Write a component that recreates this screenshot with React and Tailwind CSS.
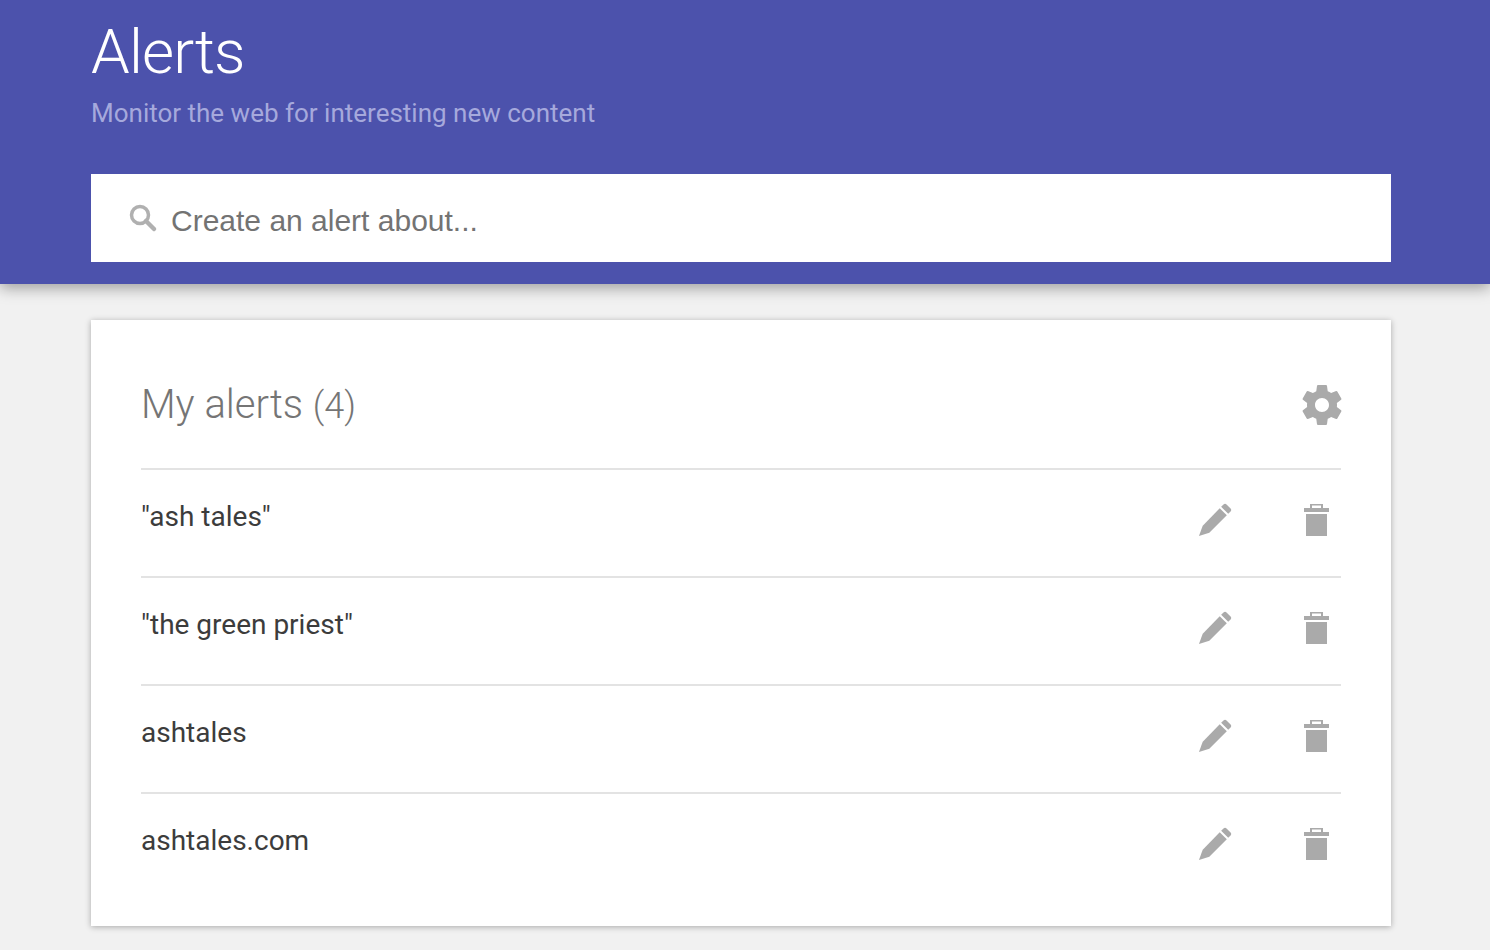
import React from 'react';

const alerts = ['"ash tales"', '"the green priest"', 'ashtales', 'ashtales.com'];

const PencilIcon = () => (
  <svg width="34" height="34" viewBox="0 0 36 36" fill="#aaaaaa">
    <path d="M1 35 L5 24 L23 5.5 L30.5 13 L12 31.5 Z" />
    <path d="M24.5 4 L27 1.5 C28 .6 29.3 .6 30.2 1.5 L34.5 5.8 C35.4 6.7 35.4 8 34.5 9 L32 11.5 Z" />
  </svg>
);

const TrashIcon = () => (
  <svg width="25" height="34" viewBox="0 0 25 34" fill="#aaaaaa">
    <path d="M0 5 H6 V1 H19 V5 H25 V9 H0 Z M8 2.5 V5 H17 V2.5 Z" fillRule="evenodd" />
    <rect x="2" y="11" width="21" height="22" />
  </svg>
);

const GearIcon = () => (
  <svg width="48" height="48" viewBox="0 0 24 24" fill="#aaaaaa">
    <path d="M19.43 12.98c.04-.32.07-.64.07-.98s-.03-.66-.07-.98l2.11-1.65c.19-.15.24-.42.12-.64l-2-3.46c-.12-.22-.39-.3-.61-.22l-2.49 1c-.52-.4-1.08-.73-1.69-.98l-.38-2.65C14.46 2.18 14.25 2 14 2h-4c-.25 0-.46.18-.49.42l-.38 2.65c-.61.25-1.17.59-1.69.98l-2.49-1c-.23-.09-.49 0-.61.22l-2 3.46c-.13.22-.07.49.12.64l2.11 1.65c-.04.32-.07.65-.07.98s.03.66.07.98l-2.11 1.65c-.19.15-.24.42-.12.64l2 3.46c.12.22.39.3.61.22l2.49-1c.52.4 1.08.73 1.69.98l.38 2.65c.03.24.24.42.49.42h4c.25 0 .46-.18.49-.42l.38-2.65c.61-.25 1.17-.59 1.69-.98l2.49 1c.23.09.49 0 .61-.22l2-3.46c.12-.22.07-.49-.12-.64l-2.11-1.65zM12 15.5c-1.93 0-3.5-1.57-3.5-3.5s1.57-3.5 3.5-3.5 3.5 1.57 3.5 3.5-1.57 3.5-3.5 3.5z" />
  </svg>
);

const SearchIcon = () => (
  <svg width="30" height="30" viewBox="0 0 30 30" fill="none" stroke="#b0b0b0">
    <circle cx="12" cy="12" r="8.5" strokeWidth="3.5" />
    <path d="M18 18 L26 26" strokeWidth="4.5" strokeLinecap="round" />
  </svg>
);

export default function App() {
  return (
    <div className="min-h-[950px] bg-[#f1f1f1] font-['Roboto',sans-serif] overflow-hidden">
      <header className="relative h-[284px] bg-[#4c52ac] pl-[91px] pr-[99px] shadow-[0_4px_14px_rgba(0,0,0,0.35)]">
        <h1 className="pt-[16px] text-[62px] leading-[72px] font-light text-white tracking-[-0.8px]">Alerts</h1>
        <p className="mt-[7px] text-[26px] leading-[36px] text-[#a6a9dc]">Monitor the web for interesting new content</p>
        <div className="mt-[43px] flex h-[88px] items-center bg-white pl-[37px]">
          <SearchIcon />
          <span className="ml-[13px] pt-[5px] font-['Liberation_Sans',sans-serif] text-[30px] text-[#737373]">Create an alert about...</span>
        </div>
      </header>

      <main className="ml-[91px] mr-[99px] mt-[36px] h-[606px] bg-white px-[50px] shadow-[0_1px_6px_rgba(0,0,0,0.3)]">
        <div className="flex h-[150px] items-center justify-between border-b-2 border-[#e3e3e3] pt-[23px] pb-[2px]">
          <h2 className="text-[40px] font-light text-[#757575]">
            My alerts <span className="text-[36px]">(4)</span>
          </h2>
          <div className="-mr-[5px]">
            <GearIcon />
          </div>
        </div>
        {alerts.map((alert, index) => (
          <div
            key={alert}
            className={`flex h-[108px] justify-between ${index < alerts.length - 1 ? 'border-b-2 border-[#e3e3e3]' : ''}`}
          >
            <span className="pt-[27px] text-[28px] leading-[40px] text-[#3c3c3c]">{alert}</span>
            <div className="flex items-start pt-[33px]">
              <PencilIcon />
              <div className="ml-[72px] mr-[12px]">
                <TrashIcon />
              </div>
            </div>
          </div>
        ))}
      </main>
    </div>
  );
}
